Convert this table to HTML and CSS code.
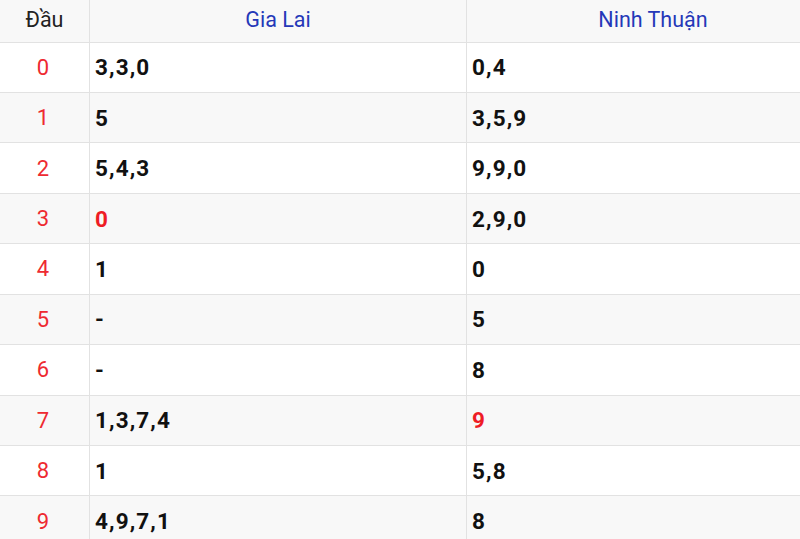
FILE: index.html
```html
<!DOCTYPE html>
<html lang="vi">
<head>
<meta charset="utf-8">
<title>Lô tô đầu</title>
<link rel="stylesheet" href="styles.css">
</head>
<body>
<table class="loto">
  <thead>
    <tr>
      <th class="col-head">Đầu</th>
      <th class="col-prov col-gl">Gia Lai</th>
      <th class="col-prov">Ninh Thuận</th>
    </tr>
  </thead>
  <tbody>
    <tr><td class="head">0</td><td class="num">3,3,0</td><td class="num">0,4</td></tr>
    <tr><td class="head">1</td><td class="num">5</td><td class="num">3,5,9</td></tr>
    <tr><td class="head">2</td><td class="num">5,4,3</td><td class="num">9,9,0</td></tr>
    <tr><td class="head">3</td><td class="num hot">0</td><td class="num">2,9,0</td></tr>
    <tr><td class="head">4</td><td class="num">1</td><td class="num">0</td></tr>
    <tr><td class="head">5</td><td class="num">-</td><td class="num">5</td></tr>
    <tr><td class="head">6</td><td class="num">-</td><td class="num">8</td></tr>
    <tr><td class="head">7</td><td class="num">1,3,7,4</td><td class="num hot">9</td></tr>
    <tr><td class="head">8</td><td class="num">1</td><td class="num">5,8</td></tr>
    <tr><td class="head">9</td><td class="num">4,9,7,1</td><td class="num">8</td></tr>
  </tbody>
</table>
</body>
</html>
```

FILE: styles.css
```css
html, body {
  margin: 0;
  padding: 0;
  background: #ffffff;
  overflow: hidden;
}

.loto {
  width: 840px;
  border-collapse: collapse;
  table-layout: fixed;
  font-family: Roboto, "Noto Sans", Arial, sans-serif;
}

.loto th,
.loto td {
  border: 1px solid #e2e2e2;
  padding: 0;
  vertical-align: middle;
}

.loto tr > :first-child {
  border-left: none;
}

.loto thead tr {
  height: 42px;
  background: #f8f8f8;
}

.loto th {
  font-weight: 400;
  font-size: 21.5px;
  text-align: center;
  padding-bottom: 2px;
  border-top: none;
}

.col-head {
  width: 89px;
  color: #222222;
  padding-right: 1px;
}

.col-prov {
  color: #2538b8;
}

.col-gl {
  width: 376px;
}

.loto tbody tr {
  height: 50.45px;
}

.loto tbody tr:nth-child(even) {
  background: #f8f8f8;
}

.loto td.head {
  text-align: center;
  color: #ee2a31;
  font-size: 22px;
  font-weight: 400;
  padding-right: 3px;
}

.loto td.num {
  padding-left: 5px;
  font-size: 22.5px;
  font-weight: 700;
  letter-spacing: 1.1px;
  color: #111111;
}

.loto td.hot {
  color: #ee1c25;
}
```
